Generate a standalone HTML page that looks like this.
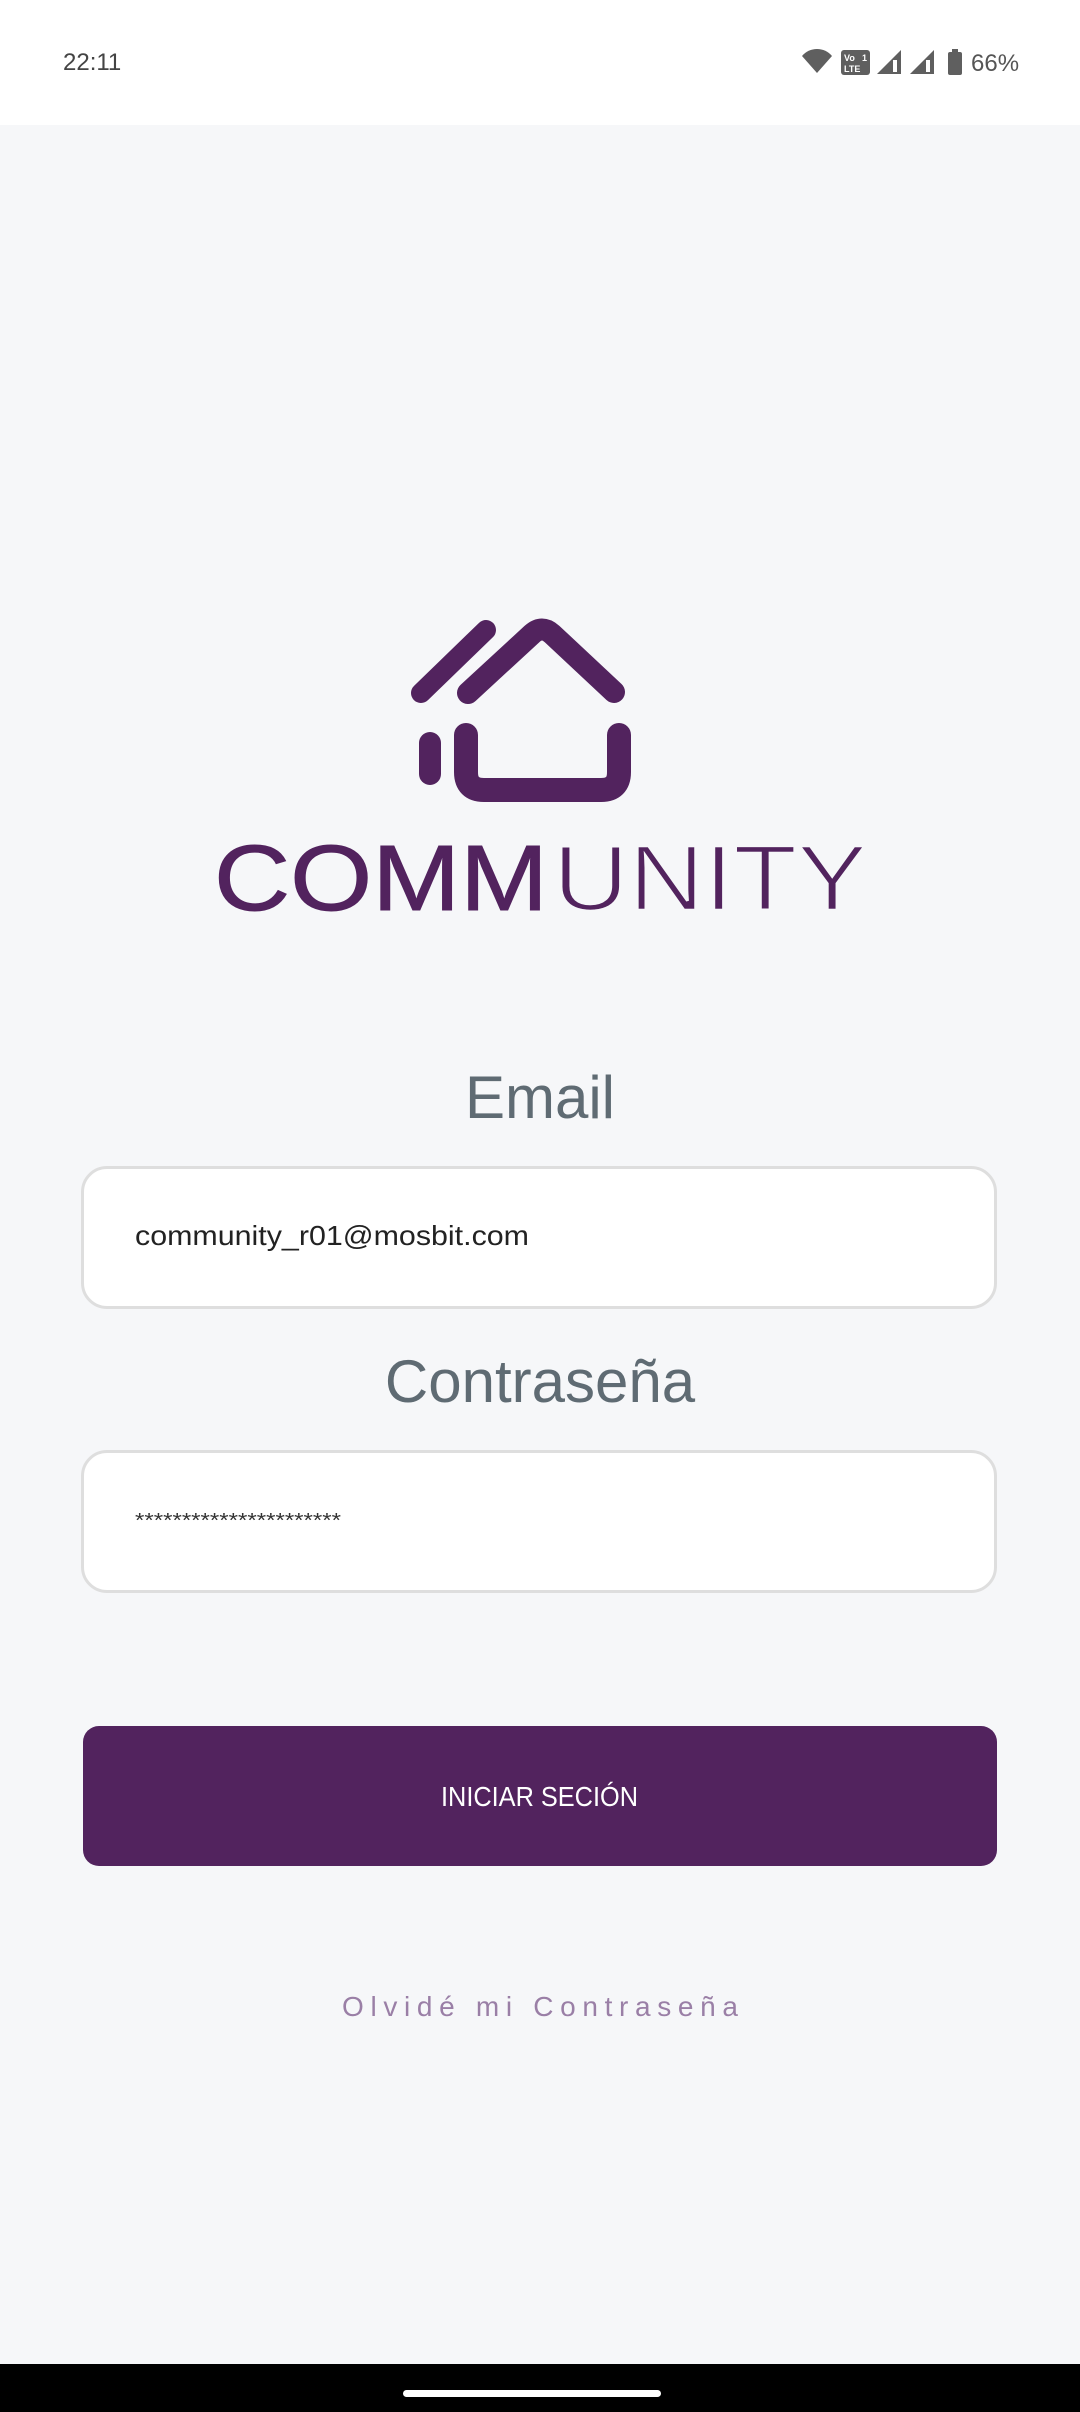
<!DOCTYPE html>
<html><head><meta charset="utf-8"><style>
html,body{margin:0;padding:0;width:1080px;height:2412px;overflow:hidden;background:#f6f7f9;font-family:"Liberation Sans",sans-serif}
.sb{position:absolute;left:0;top:0;width:1080px;height:125px;background:#fff}
.inp{position:absolute;left:81px;width:916px;background:#fff;border:3px solid #dedede;border-radius:26px;box-sizing:border-box}
.btn{position:absolute;left:83px;top:1726px;width:914px;height:140px;background:#52235e;border-radius:16px}
.nav{position:absolute;left:0;top:2364px;width:1080px;height:48px;background:#000}
</style></head><body>
<div class="sb"></div>
<div class="inp" style="top:1166px;height:143px"></div>
<div class="inp" style="top:1450px;height:143px"></div>
<div class="btn"></div>
<div class="nav"><div style="position:absolute;left:403px;top:26px;width:258px;height:7px;border-radius:4px;background:#fff"></div></div>
<svg width="1080" height="2412" style="position:absolute;left:0;top:0" xmlns="http://www.w3.org/2000/svg">
<text x="63" y="70" font-family="Liberation Sans" font-size="24" fill="#444">22:11</text>
<path d="M817 73 L832 56 Q826 49 817 49 Q808 49 802 56 Z" fill="#5f5f5f"/>
<rect x="841" y="50" width="29" height="25" rx="3" fill="#5f5f5f"/>
<text x="844" y="61" font-family="Liberation Sans" font-size="9" font-weight="bold" fill="#fff">Vo</text>
<text x="862" y="61" font-family="Liberation Sans" font-size="9" font-weight="bold" fill="#fff">1</text>
<text x="844" y="72" font-family="Liberation Sans" font-size="9" font-weight="bold" fill="#fff">LTE</text>
<path d="M877 74 L901 50 L901 74 Z" fill="#5f5f5f"/><rect x="893" y="60" width="4" height="12" fill="#fff"/>
<path d="M910 74 L934 50 L934 74 Z" fill="#5f5f5f"/><rect x="926" y="60" width="4" height="12" fill="#fff"/>
<rect x="948" y="52" width="14" height="23" rx="2" fill="#5f5f5f"/><rect x="952" y="49" width="6" height="4" fill="#5f5f5f"/>
<text x="971" y="71" font-family="Liberation Sans" font-size="24" fill="#555">66%</text>
<g stroke="#52235e" stroke-linecap="round" fill="none">
<path d="M421 693 L486 630" stroke-width="20"/>
<path d="M468 693 L532 634 Q542 625 552 634 L614 692" stroke-width="22"/>
<path d="M430 743 L430 774" stroke-width="22"/>
<path d="M466 735 L466 772 Q466 790 484 790 L601 790 Q619 790 619 772 L619 735" stroke-width="24"/>
</g>
<text x="214" y="910" font-family="Liberation Sans" font-size="93" fill="#52235e" textLength="334" lengthAdjust="spacingAndGlyphs" stroke="#52235e" stroke-width="1">COMM</text>
<text x="553" y="910" font-family="Liberation Sans" font-size="93" fill="#52235e" textLength="314" lengthAdjust="spacingAndGlyphs" stroke="#f6f7f9" stroke-width="2.5">UNITY</text>
<text x="540" y="1118" text-anchor="middle" font-family="Liberation Sans" font-size="60" fill="#5f6b73">Email</text>
<text x="135" y="1245" font-family="Liberation Sans" font-size="28" fill="#222" textLength="394" lengthAdjust="spacingAndGlyphs">community_r01@mosbit.com</text>
<text x="540" y="1402" text-anchor="middle" font-family="Liberation Sans" font-size="60" fill="#5f6b73">Contraseña</text>
<text x="135" y="1527" font-family="Liberation Sans" font-size="20" fill="#333" textLength="206" lengthAdjust="spacingAndGlyphs">**********************</text>
<text x="441" y="1806" font-family="Liberation Sans" font-size="28" fill="#fff" textLength="197" lengthAdjust="spacingAndGlyphs">INICIAR SECIÓN</text>
<text x="540" y="2016" text-anchor="middle" font-family="Liberation Sans" font-size="28" fill="#9a7fa6" textLength="396" lengthAdjust="spacing">Olvidé mi Contraseña</text>
</svg>
</body></html>
